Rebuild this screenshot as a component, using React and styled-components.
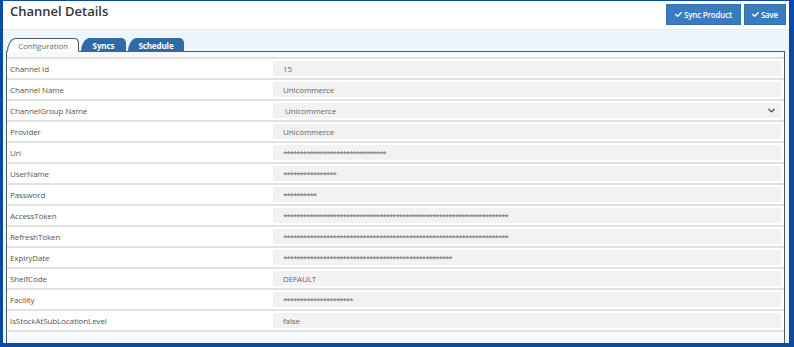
import React from "react";
import styled, { createGlobalStyle } from "styled-components";
import { FaCheck } from "react-icons/fa";
import { ChevronDown } from "lucide-react";

const Global = createGlobalStyle`
  html, body { margin: 0; padding: 0; background: #fff; }
  body { font-family: "Open Sans", "Noto Sans", sans-serif; }
  * { box-sizing: border-box; }
`;

const Frame = styled.div`
  width: 794px;
  height: 347px;
  border-style: solid;
  border-color: #0b4aa3;
  border-width: 1px 5px 4px 3px;
  display: flex;
  flex-direction: column;
  overflow: hidden;
  background: #eef6fd;
`;

const Header = styled.div`
  height: 29px;
  flex: 0 0 29px;
  background: #fff;
  display: flex;
  align-items: flex-start;
  justify-content: space-between;
  padding: 0 3px 0 7px;
  border-bottom: 1px solid #e3edf6;
`;

const Title = styled.h1`
  margin: 0;
  font-size: 13px;
  font-weight: 600;
  color: #333;
  line-height: 21px;
`;

const Actions = styled.div`
  display: flex;
  gap: 3px;
  padding-top: 3px;
`;

const Button = styled.button`
  height: 21px;
  padding: 0 ${(p) => p.$px || 8}px;
  background: #3b7cc0;
  border: 1px solid #3270b0;
  color: #fff;
  font-family: "Open Sans", sans-serif;
  font-weight: 600;
  font-size: 8px;
  display: flex;
  align-items: center;
  gap: 2px;
  letter-spacing: -0.2px;
  cursor: pointer;
  svg { width: 7px; height: 7px; }
`;

const Body = styled.div`
  flex: 1;
  display: flex;
  flex-direction: column;
  padding: 8px 4px 0 3px;
  min-height: 0;
`;

const Tabs = styled.div`
  display: flex;
  gap: 2px;
  padding-left: 1px;
  height: 14px;
  align-items: flex-end;
  position: relative;
  z-index: 1;
  margin-bottom: -1px;
`;

const Tab = styled.div`
  width: ${(p) => p.$w}px;
  height: 14px;
  border-radius: 9px 5px 0 0 / 14px 5px 0 0;
  display: flex;
  align-items: center;
  justify-content: center;
  font-size: 8px;
  line-height: 1;
  letter-spacing: -0.1px;
  padding-top: 1px;
  background: ${(p) => (p.$active ? "#fff" : "#2f6aa6")};
  color: ${(p) => (p.$active ? "#6b6b6b" : "#fff")};
  font-weight: ${(p) => (p.$active ? 400 : 700)};
  border: 1px solid ${(p) => (p.$active ? "#4c5864" : "#2f6aa6")};
  border-bottom: ${(p) => (p.$active ? "1px solid #fff" : "none")};
`;

const Panel = styled.div`
  flex: 1;
  border: 1px solid #4c5864;
  border-bottom: none;
  background: #f7fafd;
  padding-top: 5px;
  display: flex;
  flex-direction: column;
`;

const Rows = styled.div`
  background: #fff;
  border-top: 2px solid #e2e2e2;
`;

const Row = styled.div`
  height: 21px;
  display: flex;
  align-items: center;
  border-bottom: 2px solid #e2e2e2;
  padding: 0 3px 0 3px;
`;

const Label = styled.div`
  width: 263px;
  flex: 0 0 263px;
  font-size: 8px;
  color: #555;
  letter-spacing: -0.1px;
`;

const Field = styled.div`
  flex: 1;
  height: 15px;
  background: #f2f2f2;
  display: flex;
  align-items: center;
  justify-content: space-between;
  padding: 0 4px 0 ${(p) => (p.$select ? 12 : 10)}px;
  font-size: 8px;
  color: #666;
  letter-spacing: ${(p) => (p.$masked ? "-1.1px" : "-0.1px")};
  white-space: nowrap;
  overflow: hidden;
  svg { color: #444; }
`;

const rows = [
  ["Channel Id", "15"],
  ["Channel Name", "Unicommerce"],
  ["ChannelGroup Name", "Unicommerce", "select"],
  ["Provider", "Unicommerce"],
  ["Url", "*".repeat(31), "mask"],
  ["UserName", "*".repeat(16), "mask"],
  ["Password", "*".repeat(10), "mask"],
  ["AccessToken", "*".repeat(68), "mask"],
  ["RefreshToken", "*".repeat(68), "mask"],
  ["ExpiryDate", "*".repeat(51), "mask"],
  ["ShelfCode", "DEFAULT"],
  ["Facility", "*".repeat(21), "mask"],
  ["IsStockAtSubLocationLevel", "false"],
];

export default function App() {
  return (
    <>
      <Global />
      <Frame>
        <Header>
          <Title>Channel Details</Title>
          <Actions>
            <Button $px={8}>
              <FaCheck /> Sync Product
            </Button>
            <Button $px={7}>
              <FaCheck /> Save
            </Button>
          </Actions>
        </Header>
        <Body>
          <Tabs>
            <Tab $w={72} $active>Configuration</Tab>
            <Tab $w={45}>Syncs</Tab>
            <Tab $w={56}>Schedule</Tab>
          </Tabs>
          <Panel>
            <Rows>
              {rows.map(([label, value, kind]) => (
                <Row key={label}>
                  <Label>{label}</Label>
                  <Field $masked={kind === "mask"} $select={kind === "select"}>
                    <span>{value}</span>
                    {kind === "select" && <ChevronDown size={11} strokeWidth={3} />}
                  </Field>
                </Row>
              ))}
            </Rows>
          </Panel>
        </Body>
      </Frame>
    </>
  );
}
